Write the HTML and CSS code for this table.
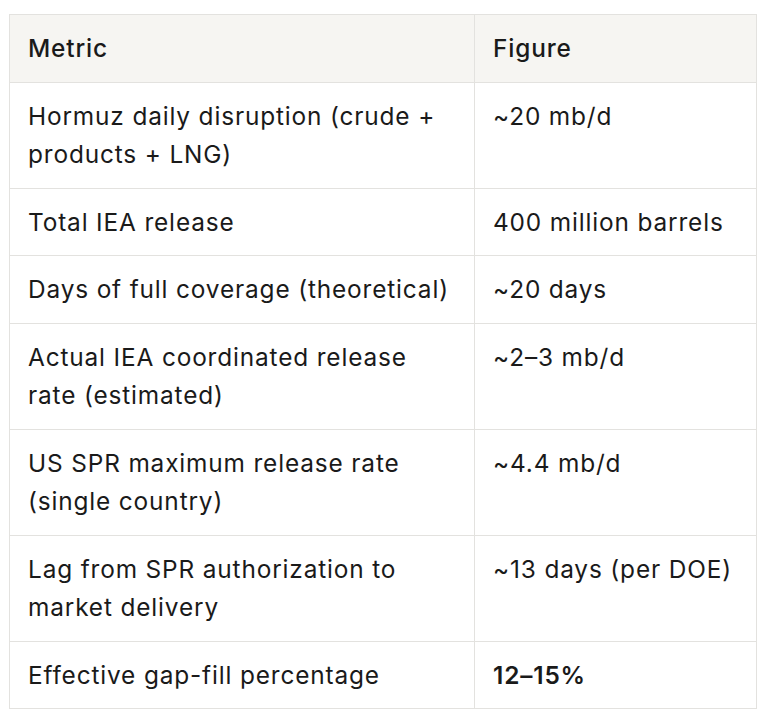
FILE: index.html
```html
<!DOCTYPE html>
<html lang="en">
<head>
<meta charset="utf-8">
<link rel="stylesheet" href="styles.css">
</head>
<body>
<div class="wrap">
<table class="data">
  <colgroup><col class="c1"><col class="c2"></colgroup>
  <thead>
    <tr><th>Metric</th><th>Figure</th></tr>
  </thead>
  <tbody>
    <tr><td>Hormuz daily disruption (crude + products + LNG)</td><td>~20 mb/d</td></tr>
    <tr><td>Total IEA release</td><td>400 million barrels</td></tr>
    <tr><td>Days of full coverage (theoretical)</td><td>~20 days</td></tr>
    <tr><td>Actual IEA coordinated release rate (estimated)</td><td>~2–3 mb/d</td></tr>
    <tr><td>US SPR maximum release rate (single country)</td><td>~4.4 mb/d</td></tr>
    <tr><td>Lag from SPR authorization to market delivery</td><td>~13 days (per DOE)</td></tr>
    <tr><td>Effective gap-fill percentage</td><td><strong>12–15%</strong></td></tr>
  </tbody>
</table>
</div>
</body>
</html>
```
FILE: styles.css
```css
html, body {
  margin: 0;
  background: #ffffff;
}
.wrap {
  padding: 14px 12px 0 9px;
}
.data {
  width: 747px;
  border-collapse: collapse;
  font-family: Inter, "Noto Sans", sans-serif;
  font-size: 24.4px;
  line-height: 38.4px;
  letter-spacing: 0.85px;
  color: #1a1a1a;
  table-layout: fixed;
}
.data .c1 { width: 465px; }
.data .c2 { width: 282px; }
.data th, .data td {
  border: 1px solid #e3e2df;
  padding: 14px 17px 14.2px 18px;
  text-align: left;
  vertical-align: top;
  font-weight: 400;
}
.data th {
  background: #f6f5f2;
  font-weight: 500;
}
.data strong { font-weight: 600; }
```
